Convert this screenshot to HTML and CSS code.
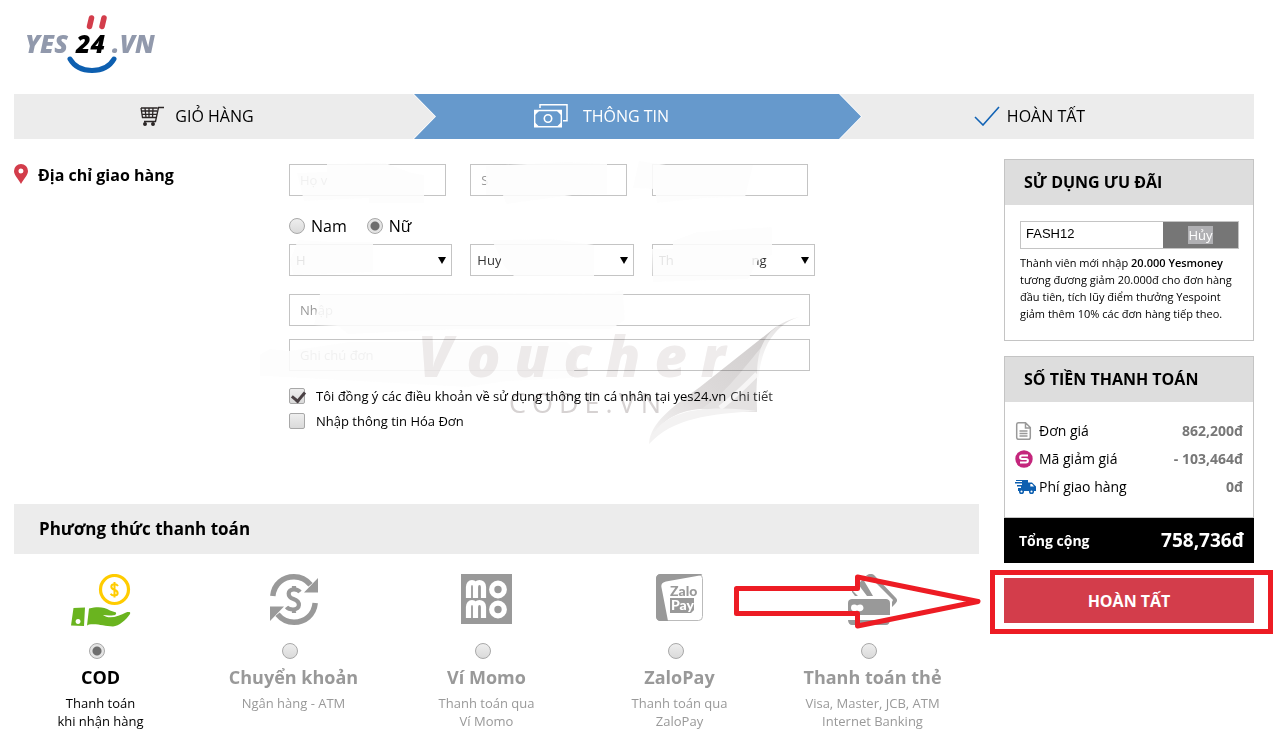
FILE: index.html
```html
<!DOCTYPE html>
<html lang="vi">
<head>
    <meta charset="UTF-8">
    <meta name="viewport" content="width=device-width, initial-scale=1.0">
    <title>YES24.VN - Thông tin thanh toán</title>
    <link rel="stylesheet" href="styles.css">
</head>
<body>
    <div class="container">
        <header class="header">
            <a href="#" class="logo" aria-label="YES24.VN">
                <svg width="150" height="70" viewBox="0 0 150 70">
                    <g stroke="#d33d4b" stroke-width="5.500" stroke-linecap="round">
                        <path d="M77.500 12l-2 8.500M90 12l-2 8.500"/>
                    </g>
                    <g class="logo-text">
                        <text x="11" y="47" fill="#9199ac">YES</text>
                        <text x="62" y="47" fill="#000">24</text>
                        <text x="98" y="47" fill="#9199ac">.VN</text>
                    </g>
                    <path d="M56 53c4 7 11 11.500 22 11.500S96 60 100 53" fill="none" stroke="#0d5fb0" stroke-width="5" stroke-linecap="round"/>
                </svg>
            </a>
        </header>

        <nav class="steps">
            <div class="step step-cart">
                <svg width="25" height="20" viewBox="0 0 25 20" fill="none" stroke="#2b2626" stroke-width="1.300">
                    <path d="M24 1.500h-5.500l-3 14H4M1 2h16.500M1 2l1.500 9.500h13.500M1.500 5h15.500M2 8.300h14.500M5 2l1 9.500M9 2v9.500M13 2l-.500 9.500"/>
                    <circle cx="5" cy="18" r="1.300" fill="#2b2626"/>
                    <circle cx="13" cy="18" r="1.300" fill="#2b2626"/>
                </svg>
                <span>GIỎ HÀNG</span>
            </div>
            <div class="step-shadow">
                <div class="step step-info">
                    <svg width="34" height="24" viewBox="0 0 34 24" fill="none" stroke="#fff">
                        <path d="M6 4V.800h27v16h-4" stroke-width="1.500"/>
                        <path d="M.700 6.500h26.600v16.300H.700z" stroke-width="1.400"/>
                        <path d="M1 6.500h4.500L1 11zM27 6.500h-4.500L27 11zM1 23h4.500L1 18.500zM27 23h-4.500l4.500-4.500z" fill="#fff" stroke="none"/>
                        <circle cx="14" cy="14.500" r="3.700" stroke-width="1.600"/>
                    </svg>
                    <span>THÔNG TIN</span>
                </div>
            </div>
            <div class="step step-done">
                <svg width="26" height="20" viewBox="0 0 26 20" fill="none" stroke="#1263b5" stroke-width="1.600">
                    <path d="M1 11l8 8L25 1"/>
                </svg>
                <span>HOÀN TẤT</span>
            </div>
        </nav>

        <main class="content">
            <div class="left">
                <section class="address">
                    <h2 class="address-title">
                        <svg width="14" height="20" viewBox="0 0 14 20">
                            <path fill="#d33d4b" fill-rule="evenodd" d="M7 0a7 7 0 0 1 7 7c0 4-4 7.500-7 13C4 14.500 0 11 0 7a7 7 0 0 1 7-7zm0 4.500a2.500 2.500 0 1 0 0 5 2.500 2.500 0 0 0 0-5z"/>
                        </svg>
                        Địa chỉ giao hàng
                    </h2>
                    <form class="fields" id="orderForm">
                        <div class="row">
                            <input type="text" class="box" placeholder="Họ v" aria-label="Họ">
                            <input type="text" class="box" placeholder="S" aria-label="S">
                            <input type="text" class="box" aria-label="Email">
                        </div>
                        <div class="gender">
                            <label><input type="radio" name="gender"> Nam</label>
                            <label><input type="radio" name="gender" checked> Nữ</label>
                        </div>
                        <div class="row">
                            <div class="select">
                                <select aria-label="H"><option>H</option></select>
                            </div>
                            <div class="select">
                                <select aria-label="Huy"><option>Huy</option></select>
                            </div>
                            <div class="select">
                                <select aria-label="Th"><option>Th&nbsp;&nbsp;&nbsp;&nbsp;&nbsp;&nbsp;&nbsp;&nbsp;&nbsp;&nbsp;&nbsp;&nbsp;&nbsp;&nbsp;&nbsp;&nbsp;&nbsp;&nbsp;&nbsp;&nbsp;&nbsp;&nbsp;&nbsp;ng</option></select>
                            </div>
                        </div>
                        <input type="text" class="box wide" placeholder="Nhập" aria-label="Nhập">
                        <input type="text" class="box wide note" placeholder="Ghi chú đơn" aria-label="Ghi chú">
                        <div class="checks">
                            <div class="check">
                                <input type="checkbox" id="agree" checked>
                                <label for="agree">Tôi đồng ý các điều khoản về sử dụng thông tin cá nhân tại yes24.vn</label>
                                <a href="#">Chi tiết</a>
                            </div>
                            <div class="check">
                                <input type="checkbox" id="invoice">
                                <label for="invoice">Nhập thông tin Hóa Đơn</label>
                            </div>
                        </div>

                        <svg class="smudge" width="560" height="310" viewBox="260 148 560 310" aria-hidden="true">
                            <path d="M297 173l30-1v-8l58-1 24 9 15 3v28h-55v-5l-65 3zM486 166l80-4 41 2v30l-35 1-66 9-3-9h-17zM639 161l27 4h82l5 0-8 32-40 1-48 5-2-14-22-1zM290 260l8-20 35 2h40v30l-80 3zM492 240l60-1 42 6v31l-80 0-10-10zM652 249h21v-8l24-9 75-5v28l-14 5-10 19-95 3zM320 294l291-1 12-3 2 30-14 9H460l-112 5-10-8-24-1zM270 349l19 2 60-9h218l10 10-4 26-66 3-40 6-200-11h-46z"/>
                        </svg>
                        <svg class="watermark" width="560" height="310" viewBox="260 148 560 310" aria-hidden="true">
                            <defs>
                                <linearGradient id="fold" x1="0" y1="1" x2="1" y2="0">
                                    <stop offset="0" stop-color="#f6f5f5"/>
                                    <stop offset=".4" stop-color="#dedbdb"/>
                                    <stop offset="1" stop-color="#cfcccc"/>
                                </linearGradient>
                                <linearGradient id="page" x1="0" y1="0" x2="0" y2="1">
                                    <stop offset="0" stop-color="#e2e0e0"/>
                                    <stop offset="1" stop-color="#fff"/>
                                </linearGradient>
                            </defs>
                            <text x="418" y="377" class="mark-big">Voucher</text>
                            <text x="509" y="413" class="mark-small">CODE.VN</text>
                            <path fill="url(#fold)" d="M777 326l-77 61c-28 20-50 36-51 57 9-22 27-33 51-35l57 3c-3-40 2-66 20-86z"/>
                            <path fill="#e4e2e2" d="M766 342c-9 20-11 45-9 70l-56-3c27-17 42-41 65-67z"/>
                            <path fill="none" stroke="#f7f6f6" stroke-width="5" d="M757 374c-12 12-24 24-37 34"/>
                            <path fill="url(#page)" d="M799 317c-14 4-24 14-31 26-8 16-9 30-10 42-4-33 6-60 41-68z"/>
                            <path fill="#f3f2f2" d="M649 444c6-22 29-34 60-35 17-1 32 0 48 2-48 3-84 7-108 33z"/>
                        </svg>
                    </form>
                </section>

                <section class="payment">
                    <h2 class="payment-title">Phương thức thanh toán</h2>
                    <div class="methods">
                        <label class="method active">
                            <svg class="method-icon" width="60" height="54" viewBox="0 0 60 54">
                                <circle cx="43.500" cy="15.500" r="14" fill="none" stroke="#fc0" stroke-width="3.200"/>
                                <path d="M47 12c-1-1.500-2-1.800-3.400-1.800-4.300 0-4.300 4.400-.400 5.600 4.800 1.400 4.400 5.700 0 5.700-1.600 0-2.800-.600-3.600-1.800M43.500 8v15.500" fill="none" stroke="#fc0" stroke-width="2"/>
                                <path fill="#6ab41f" fill-rule="evenodd" d="M2.500 34l11.500-.500-1 18.500-13-.500zM7 45a2.500 2.500 0 1 0 .1 0z"/>
                                <path fill="#6ab41f" d="M18 34.500c9-2 15-1.500 21 2l6 2c1 3-3 3-7 3l-6-.500c6 5 16 1 23-2.500 3-1 5-.500 4 1.500-4 6-11 12-17 12.500-9 0-14-3-24-2l-2 1z"/>
                            </svg>
                            <input type="radio" name="payment" checked>
                            <span class="method-name">COD</span>
                            <span class="method-desc">Thanh toán<br>khi nhận hàng</span>
                        </label>
                        <label class="method">
                            <svg class="method-icon" width="48" height="54" viewBox="0 0 48 54">
                                <g fill="none" stroke="#999" stroke-width="5.500">
                                    <path d="M2.800 22C4 10 13 2.800 24 2.800c7 0 12 2.500 16.500 8"/>
                                    <path d="M45.200 29C44 41 35 48.200 24 48.200c-7 0-12-2.500-16.500-8"/>
                                </g>
                                <path fill="#999" d="M48 4v14.500H34zM0 47V32.500h14z"/>
                                <path d="M30 18c-1.500-2-3.500-2.700-6-2.700-7 0-7 7.700-.500 9.700 7.500 2.500 7 10.500-.500 10.500-2.700 0-5-.700-6.500-2.500M24 12v4M24 35v4" fill="none" stroke="#999" stroke-width="4.200"/>
                            </svg>
                            <input type="radio" name="payment">
                            <span class="method-name">Chuyển khoản</span>
                            <span class="method-desc">Ngân hàng - ATM</span>
                        </label>
                        <label class="method">
                            <svg class="method-icon" width="51" height="54" viewBox="0 0 51 54">
                                <path fill="#999" d="M0 0h51v50H0z"/>
                                <g fill="none" stroke="#fff" stroke-width="5.200">
                                    <path d="M7.500 24v-11c0-6 7-6 7 0v11M14.500 24v-11c0-6 8-6 8 0v11"/>
                                    <path d="M7.500 44v-11c0-6 7-6 7 0v11M14.500 44v-11c0-6 8-6 8 0v11"/>
                                    <circle cx="37" cy="15.500" r="6.300"/>
                                    <circle cx="37" cy="35.500" r="6.300"/>
                                </g>
                            </svg>
                            <input type="radio" name="payment">
                            <span class="method-name">Ví Momo</span>
                            <span class="method-desc">Thanh toán qua<br>Ví Momo</span>
                        </label>
                        <label class="method">
                            <svg class="method-icon" width="47" height="54" viewBox="0 0 47 54">
                                <rect x=".5" y=".5" width="46" height="46" rx="4" fill="#fff" stroke="#bbb"/>
                                <path fill="#999" d="M4 0h40c1 0 2 .500 2.500 1L10 7.500c-4 1-5 3-4.500 6L12 47H4c-2 0-4-2-4-4V4c0-2 2-4 4-4z"/>
                                <path fill="#999" d="M14 24h24v12l-3 3H14z"/>
                                <text x="14" y="22" class="zalo" fill="#999">Zalo</text>
                                <text x="15" y="36" class="zalo" fill="#fff">Pay</text>
                            </svg>
                            <input type="radio" name="payment">
                            <span class="method-name">ZaloPay</span>
                            <span class="method-desc">Thanh toán qua<br>ZaloPay</span>
                        </label>
                        <label class="method">
                            <svg class="method-icon" width="50" height="54" viewBox="0 0 50 54">
                                <path fill="#999" d="M4 16l6 6H7l-3-4zM10 10l5-5 10 17h-6zM18 2c2-2 5-3 8-1l22 23c2 2 1 4-1 6l-3 3v-5l1-2-22-22z"/>
                                <path fill="#999" d="M4 25h34c2 0 4 1 4 4v12H0V29c0-3 2-4 4-4zM0 46h42c0 3-2 5-4 5H4c-2 0-4-2-4-5z"/>
                                <path fill="#fff" d="M6 30.500c1.500 0 2 .300 3 1 4-2.500 6.500 0 6.500 2.500s-3 4.500-6.500 2.500c-3.500 2-6 0-6-2.500s1-3.500 3-3.500z"/>
                            </svg>
                            <input type="radio" name="payment">
                            <span class="method-name">Thanh toán thẻ</span>
                            <span class="method-desc">Visa, Master, JCB, ATM<br>Internet Banking</span>
                        </label>
                    </div>
                </section>
            </div>

            <aside class="sidebar">
                <section class="card">
                    <h3 class="card-title">SỬ DỤNG ƯU ĐÃI</h3>
                    <div class="promo">
                        <div class="coupon">
                            <input type="text" value="FASH12" aria-label="Mã giảm giá">
                            <button type="button"><span>Hủy</span></button>
                        </div>
                        <p>Thành viên mới nhập <b>20.000 Yesmoney</b> tương đương giảm 20.000đ cho đơn hàng đầu tiên, tích lũy điểm thưởng Yespoint giảm thêm 10% các đơn hàng tiếp theo.</p>
                    </div>
                </section>

                <section class="card card-total">
                    <h3 class="card-title">SỐ TIỀN THANH TOÁN</h3>
                    <dl class="prices">
                        <div>
                            <dt>
                                <svg width="22" height="20" viewBox="0 0 22 20" fill="none" stroke="#999" stroke-width="1.500">
                                    <path d="M3.500 1.700h7l4.800 4.800v10c0 1-.800 1.800-1.800 1.800h-10c-1 0-1.800-.800-1.800-1.800v-13c0-1 .800-1.800 1.800-1.800zM10.500 2v5h5M4.500 10h8M4.500 12.500h8M4.500 15h8"/>
                                </svg>
                                Đơn giá
                            </dt>
                            <dd>862,200đ</dd>
                        </div>
                        <div>
                            <dt>
                                <svg width="22" height="20" viewBox="0 0 22 20">
                                    <circle cx="9" cy="10" r="8.700" fill="#c4267c"/>
                                    <path d="M13 6.500H7c-2.500 0-2.500 3.500 0 3.500h4c2.500 0 2.500 3.500 0 3.500H5" fill="none" stroke="#fff" stroke-width="2"/>
                                </svg>
                                Mã giảm giá
                            </dt>
                            <dd>- 103,464đ</dd>
                        </div>
                        <div>
                            <dt>
                                <svg width="22" height="20" viewBox="0 0 22 20">
                                    <path fill="#0d5fb0" d="M1 3h12v11H3v-3h3V9.500H2V8h5V6.500H0V5h7V4H1zM13 5.500h4l4 4V14h-8z"/>
                                    <path fill="#fff" d="M15.300 7h1.700l2 2.500h-3.700z"/>
                                    <g fill="#fff" stroke="#0d5fb0" stroke-width="1.500">
                                        <circle cx="6.500" cy="14.500" r="1.800"/>
                                        <circle cx="16.500" cy="14.500" r="1.800"/>
                                    </g>
                                </svg>
                                Phí giao hàng
                            </dt>
                            <dd>0đ</dd>
                        </div>
                    </dl>
                </section>
                <div class="total">
                    <span>Tổng cộng</span>
                    <strong>758,736đ</strong>
                </div>

                <div class="submit">
                    <button type="submit" form="orderForm">HOÀN TẤT</button>
                    <div class="highlight"></div>
                    <svg class="arrow" width="250" height="56" viewBox="0 0 250 56">
                        <path d="M4.500 15.500h121V4L246 28.500 125.500 53V40.500h-121z" fill="none" stroke="#ed1c24" stroke-width="5" stroke-linejoin="round"/>
                    </svg>
                </div>
            </aside>
        </main>
    </div>
</body>
</html>
```
FILE: styles.css
```css
/* General */
* {
    box-sizing: border-box;
}
body {
    margin: 0;
    font-family: 'Open Sans', sans-serif;
    font-size: 13px;
    color: #000;
    background: #fff;
}
h2, h3, p, dl, dd {
    margin: 0;
}
.container {
    padding: 0 29px 0 14px;
}
input, select, button {
    font-family: inherit;
}

/* Header */
.header {
    height: 94px;
    padding-top: 6px;
}
.logo {
    display: inline-block;
}
.logo svg {
    display: block;
}
.logo-text {
    font-weight: 800;
    font-style: italic;
    font-size: 25px;
}

/* Steps */
.steps {
    display: flex;
    height: 45px;
    background: #ececec;
    font-size: 16px;
}
.step {
    display: flex;
    align-items: center;
    justify-content: center;
    height: 45px;
    padding-bottom: 2px;
}
.step-cart {
    flex: 366;
    gap: 10px;
    padding-right: 34px;
}
.step-shadow {
    flex: 447;
    margin-right: -22px;
    filter: drop-shadow(1px 0 0 #fff) drop-shadow(-1px 0 0 #fff);
}
.step-info {
    gap: 15px;
    padding-right: 72px;
    color: #fff;
    background: #6699cc;
    clip-path: polygon(0 0, calc(100% - 22px) 0, 100% 50%, calc(100% - 22px) 100%, 0 100%, 22px 50%);
}
.step-done {
    flex: 381;
    gap: 7px;
    padding-right: 34px;
}

/* Layout */
.content {
    display: flex;
    gap: 25px;
    padding-top: 20px;
}
.left {
    flex: 1;
}
.sidebar {
    width: 250px;
}

/* Address form */
.address {
    display: flex;
    padding-top: 5px;
}
.address-title {
    display: flex;
    align-items: flex-start;
    gap: 10px;
    width: 275px;
    font-size: 16px;
    line-height: 22px;
    font-weight: 700;
}
.fields {
    position: relative;
    flex: 1;
    max-width: 526px;
}
.row {
    display: grid;
    grid-template-columns: repeat(3, 1fr);
    gap: 18px;
}
.box {
    width: 96%;
    height: 32px;
    padding: 0 10px;
    border: 1px solid #c4c4c4;
    font-size: 13px;
    background: #fff;
}
.box::placeholder {
    color: #999;
}
.wide {
    display: block;
    width: 99%;
    margin-top: 18px;
}
.note {
    margin-top: 13px;
}
.gender {
    display: flex;
    gap: 20px;
    margin: 18px 0 6px;
    font-size: 16px;
    line-height: 24px;
}
.gender label {
    display: flex;
    align-items: center;
    gap: 6px;
}
.select {
    position: relative;
}
.select select {
    display: block;
    width: 100%;
    height: 32px;
    padding: 0 6px;
    border: 1px solid #c4c4c4;
    border-radius: 0;
    font-size: 13px;
    color: #333;
    background: #fff;
    appearance: none;
}
.select::after {
    content: "";
    position: absolute;
    right: 6px;
    top: 13px;
    border: 4px solid transparent;
    border-top: 7px solid #000;
    border-bottom: 0;
}

/* Radio and checkbox */
input[type="radio"],
input[type="checkbox"] {
    appearance: none;
    flex: none;
    width: 16px;
    height: 16px;
    margin: 0;
    border: 1px solid #a8a8a8;
    background: linear-gradient(#eee, #dadada);
}
input[type="radio"] {
    border-radius: 50%;
}
input[type="radio"]:checked {
    background: radial-gradient(circle, #6e6e6e 0 4px, #e4e4e4 5px);
}
input[type="checkbox"] {
    border-radius: 2px;
}
input[type="checkbox"]:checked::after {
    content: "";
    display: block;
    width: 6px;
    height: 10px;
    margin: 0 0 0 4px;
    border: solid #4a4144;
    border-width: 0 3px 3px 0;
    transform: rotate(40deg);
}
.checks {
    margin-top: 12px;
}
.check {
    display: flex;
    align-items: center;
    height: 25px;
}
.check label {
    margin: 0 4px 0 11px;
}
.check a {
    color: #333;
    text-decoration: none;
}

/* Faded areas and watermark over the form */
.smudge,
.watermark {
    position: absolute;
    left: -29px;
    top: -16px;
    pointer-events: none;
}
.smudge {
    fill: #fdfdfd;
    opacity: 0.88;
}
.watermark {
    mix-blend-mode: multiply;
}
.mark-big {
    font-size: 56px;
    font-weight: 800;
    font-style: italic;
    letter-spacing: 14px;
    fill: #efecec;
}
.mark-small {
    font-size: 27px;
    font-weight: 400;
    letter-spacing: 6px;
    fill: #d6d2d2;
}

/* Payment */
.payment {
    margin-top: 71px;
}
.payment-title {
    padding: 0 25px;
    font-size: 17px;
    line-height: 50px;
    font-weight: 700;
    background: #ececec;
}
.methods {
    display: grid;
    grid-template-columns: repeat(5, 1fr);
    padding-top: 20px;
}
.method {
    display: flex;
    flex-direction: column;
    align-items: center;
    padding-right: 20px;
    text-align: center;
    color: #999;
}
.method.active {
    color: #000;
}
.method input[type="radio"] {
    margin: 15px 8px 5px 0;
}
.method-name {
    font-size: 18px;
    line-height: 26px;
    font-weight: 700;
}
.method-desc {
    margin-top: 4px;
    line-height: 18px;
}
.zalo {
    font-family: Lato, sans-serif;
    font-size: 14px;
    font-weight: 900;
}

/* Sidebar */
.card {
    border: 1px solid #c4c4c4;
}
.card-title {
    padding: 0 19px;
    font-size: 16px;
    line-height: 45px;
    font-weight: 700;
    background: #ddd;
}
.promo {
    padding: 16px 14px 18px 15px;
}
.coupon {
    display: flex;
    height: 28px;
    margin-bottom: 5px;
    border: 1px solid #c4c4c4;
}
.coupon input {
    flex: 1;
    min-width: 0;
    padding: 0 5px 4px;
    border: 0;
    font-family: 'Liberation Sans', sans-serif;
    font-size: 13px;
}
.coupon button {
    width: 75px;
    padding: 0;
    border: 0;
    color: #fff;
    font-size: 13px;
    background: #767676;
}
.coupon button span {
    background: #b0b0b3;
}
.promo p {
    font-size: 11px;
    line-height: 17px;
}
.promo b {
    font-weight: 600;
}
.card-total {
    margin-top: 15px;
}
.prices {
    padding: 15px 10px 16px;
    font-size: 14px;
    line-height: 28px;
}
.prices div {
    display: flex;
    justify-content: space-between;
}
.prices dt {
    display: flex;
    align-items: center;
    gap: 2px;
}
.prices dd {
    font-weight: 700;
    color: #777;
}
.total {
    display: flex;
    justify-content: space-between;
    padding: 0 10px 0 15px;
    font-size: 14px;
    line-height: 45px;
    font-weight: 700;
    color: #fff;
    background: #000;
}
.total strong {
    font-size: 19px;
    font-weight: 700;
}
.submit {
    position: relative;
    margin-top: 15px;
}
.submit button {
    display: block;
    width: 100%;
    height: 45px;
    border: 0;
    font-size: 16px;
    font-weight: 700;
    color: #fff;
    background: #d33d4b;
}
.highlight {
    position: absolute;
    inset: -8px -19px -11px -14px;
    border: 5px solid #ed1c24;
    pointer-events: none;
}
.arrow {
    position: absolute;
    right: 272px;
    top: -5px;
    pointer-events: none;
}
```
